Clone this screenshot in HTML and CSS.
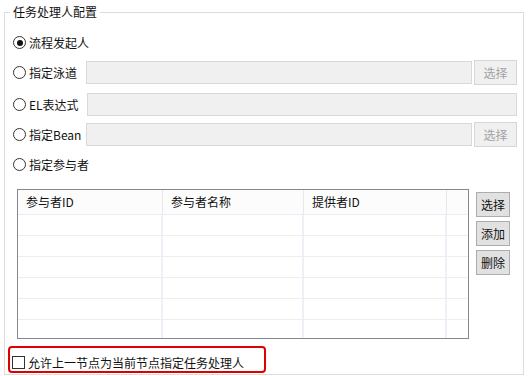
FILE: index.html
```html
<!DOCTYPE html>
<html lang="zh-CN">
<head>
    <meta charset="UTF-8">
    <title>任务处理人配置</title>
    <link rel="stylesheet" href="styles.css">
</head>
<body>
    <fieldset class="group">
        <legend>任务处理人配置</legend>

        <div class="row row-first">
            <span class="radio checked"></span>
            <span class="label">流程发起人</span>
        </div>

        <div class="row">
            <div class="opt">
                <span class="radio"></span>
                <span class="label">指定泳道</span>
            </div>
            <div class="field"></div>
            <button class="btn-off">选择</button>
        </div>

        <div class="row row-el">
            <div class="opt opt-el">
                <span class="radio"></span>
                <span class="label">EL表达式</span>
            </div>
            <div class="field"></div>
        </div>

        <div class="row">
            <div class="opt">
                <span class="radio"></span>
                <span class="label">指定Bean</span>
            </div>
            <div class="field"></div>
            <button class="btn-off">选择</button>
        </div>

        <div class="row">
            <span class="radio"></span>
            <span class="label">指定参与者</span>
        </div>

        <!-- 参与者列表 -->
        <div class="members">
            <div class="grid">
                <div class="grid-head">
                    <div class="cell c1">参与者ID</div>
                    <div class="cell c2">参与者名称</div>
                    <div class="cell c3">提供者ID</div>
                    <div class="cell c4"></div>
                </div>
                <div class="grid-row"><div class="cell c1"></div><div class="cell c2"></div><div class="cell c3"></div><div class="cell c4"></div></div>
                <div class="grid-row"><div class="cell c1"></div><div class="cell c2"></div><div class="cell c3"></div><div class="cell c4"></div></div>
                <div class="grid-row"><div class="cell c1"></div><div class="cell c2"></div><div class="cell c3"></div><div class="cell c4"></div></div>
                <div class="grid-row"><div class="cell c1"></div><div class="cell c2"></div><div class="cell c3"></div><div class="cell c4"></div></div>
                <div class="grid-row"><div class="cell c1"></div><div class="cell c2"></div><div class="cell c3"></div><div class="cell c4"></div></div>
                <div class="grid-row"><div class="cell c1"></div><div class="cell c2"></div><div class="cell c3"></div><div class="cell c4"></div></div>
            </div>
            <div class="side">
                <button class="btn">选择</button>
                <button class="btn">添加</button>
                <button class="btn">删除</button>
            </div>
        </div>

        <div class="allow">
            <span class="check"></span>
            <span class="label">允许上一节点为当前节点指定任务处理人</span>
        </div>
    </fieldset>
</body>
</html>
```

FILE: styles.css
```css
body {
    margin: 0;
    padding: 4px 6px 0 4px;
    background: #fff;
    font-family: "Noto Sans CJK SC", "Noto Sans", sans-serif;
    font-size: 12px;
    color: #111;
}

.group {
    box-sizing: border-box;
    width: 520px;
    height: 371px;
    margin: 0;
    padding: 0 6px 0 8px;
    border: 1px solid #dcdcdc;
    display: flex;
    flex-direction: column;
}

.group legend {
    padding: 0 3px;
    margin-left: -3px;
    line-height: 16px;
}

.row {
    display: flex;
    align-items: center;
    height: 25px;
    margin-top: 5px;
}

.row-first {
    margin-top: 10px;
}

.row-el {
    margin-top: 7px;
}

.opt {
    display: flex;
    align-items: center;
    width: 73px;
    flex-shrink: 0;
}

.opt-el {
    width: 74px;
}

.label {
    line-height: 16px;
    white-space: nowrap;
}

/* 单选按钮 */
.radio {
    box-sizing: border-box;
    width: 13px;
    height: 13px;
    border: 1px solid #333;
    border-radius: 50%;
    background: #fff;
    margin-right: 3px;
    display: flex;
    align-items: center;
    justify-content: center;
    flex-shrink: 0;
}

.radio.checked::after {
    content: "";
    width: 6px;
    height: 6px;
    border-radius: 50%;
    background: #111;
}

.field {
    box-sizing: border-box;
    flex: 1;
    height: 23px;
    background: #f0f0f0;
    border: 1px solid #d9d9d9;
}

.btn-off,
.btn {
    box-sizing: border-box;
    height: 25px;
    padding: 0;
    font-family: inherit;
    font-size: 12px;
}

.btn-off {
    width: 43px;
    margin-left: 2px;
    background: #f0f0f0;
    border: 1px solid #d6d6d6;
    color: #a3a3a3;
}

.members {
    display: flex;
    margin-top: 12px;
    margin-left: 4px;
}

.grid {
    box-sizing: border-box;
    width: 452px;
    height: 150px;
    border: 1px solid #828790;
    overflow: hidden;
}

.grid-head,
.grid-row {
    display: flex;
}

.grid-head {
    height: 24px;
    line-height: 23px;
    background: #fcfcfc;
    border-bottom: 1px solid #e6edf8;
}

.grid-row {
    height: 20px;
    border-bottom: 1px solid #eeeeee;
}

.cell {
    box-sizing: border-box;
    padding-left: 8px;
}

.c1 { width: 145px; }
.c2 { width: 141px; }
.c3 { width: 143px; }
.c4 { flex: 1; }

.grid-head .cell {
    border-right: 1px solid #e8e8e8;
}

.grid-row .cell {
    border-right: 2px solid #edf1f7;
}

.grid-head .c4,
.grid-row .c4 {
    border-right: none;
}

.side {
    display: flex;
    flex-direction: column;
    gap: 4px;
    margin-left: 7px;
    margin-top: 3px;
}

.btn {
    width: 34px;
    background: #e1e1e1;
    border: 1px solid #adadad;
    color: #111;
}

/* 红框复选项 */
.allow {
    box-sizing: border-box;
    display: flex;
    align-items: center;
    width: 258px;
    height: 27px;
    margin-top: 7px;
    margin-left: -5px;
    padding: 6px 0 0 2px;
    border: 2px solid #e00000;
    border-radius: 4px;
}

.check {
    box-sizing: border-box;
    width: 13px;
    height: 13px;
    border: 1px solid #333;
    background: #fff;
    margin-right: 3px;
    flex-shrink: 0;
}
```
